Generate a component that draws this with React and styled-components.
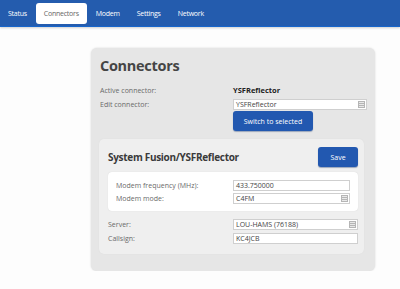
import React from 'react';
import styled, { createGlobalStyle } from 'styled-components';

const Global = createGlobalStyle`
  html, body {
    margin: 0;
    padding: 0;
    background: #fdfdfd;
    font-family: "Open Sans", "DejaVu Sans", sans-serif;
  }
`;

const Nav = styled.div`
  height: 26px;
  background: #245cae;
  border-bottom: 1px solid #1766cc;
  box-shadow: 0 1px 2px #cfcfcf;
  display: flex;
  align-items: center;
  gap: 1px;
`;

const Tab = styled.div`
  height: 21px;
  padding: 0 8px;
  display: flex;
  align-items: center;
  font-size: 7px;
  letter-spacing: -0.25px;
  border-radius: 3px;
  color: ${p => (p.$active ? '#666' : '#fff')};
  background: ${p => (p.$active ? '#fff' : 'transparent')};
`;

const Main = styled.div`
  padding: 21px 0 0 91px;
`;

const Card = styled.div`
  width: 284px;
  box-sizing: border-box;
  background: #e6e6e6;
  border-radius: 6px;
  box-shadow: 0 0 2px #d4d4d4;
  padding: 8px 8px 17px 9px;
`;

const Title = styled.h1`
  margin: 0 0 9px;
  font-size: 14.5px;
  font-weight: 700;
  letter-spacing: -0.3px;
  color: #454545;
  height: 20px;
  line-height: 20px;
`;

const Row = styled.div`
  display: grid;
  grid-template-columns: ${p => p.$label}px 1fr;
  align-items: center;
  height: ${p => p.$h || 11}px;
  margin-bottom: ${p => p.$gap ?? 2}px;
`;

const Label = styled.span`
  font-size: 7px;
  line-height: 9px;
  color: #6a6a6a;
`;

const Value = styled.span`
  font-size: 7.5px;
  line-height: 9px;
  font-weight: 700;
  color: #222;
`;

const Field = styled.div`
  position: relative;
  height: 11px;
  width: ${p => p.$w}px;
  box-sizing: border-box;
  background: #fff;
  border: 1px solid #cfcfcf;
  font-size: 7px;
  color: #444;
  padding-left: 2px;
  line-height: 9px;
`;

const SelectIcon = styled.span`
  position: absolute;
  right: 1px;
  top: 1px;
  width: 7px;
  height: 7px;
  background: #b5b5b5;
  display: flex;
  flex-direction: column;
  justify-content: center;
  gap: 1px;
  padding: 0 1px;
  box-sizing: border-box;
  & > i {
    display: block;
    height: 1px;
    background: #e8e8e8;
  }
`;

const Button = styled.button`
  display: block;
  font-family: inherit;
  font-size: 7px;
  color: #fff;
  background: #2258b0;
  border: none;
  border-radius: 3px;
  box-shadow: 0 1px 1px #9aa6bb;
  height: 20px;
  width: ${p => p.$w}px;
  padding: 0;
`;

const Actions = styled.div`
  display: flex;
  padding-left: 133px;
  margin-top: -1px;
`;

const Panel = styled.div`
  margin: 8px 3px 0 -1px;
  background: #efefef;
  border-radius: 5px;
  box-shadow: 0 0 1px #d8d8d8;
  padding: 8px 6px 10px 9px;
`;

const PanelHead = styled.div`
  display: flex;
  justify-content: space-between;
  align-items: center;
  height: 20px;
  margin-bottom: 5px;
`;

const SubTitle = styled.h2`
  margin: 0;
  font-size: 10px;
  letter-spacing: -0.3px;
  font-weight: 700;
  color: #3a3a3a;
`;

const Box = styled.div`
  background: #fff;
  border-radius: 4px;
  box-shadow: 0 0 1px #cfcfcf;
  padding: 8px 8px 5px 8px;
  margin-bottom: 8px;
`;

const Select = ({ w, children }) => (
  <Field $w={w}>
    {children}
    <SelectIcon>
      <i />
      <i />
      <i />
    </SelectIcon>
  </Field>
);

export default function App() {
  return (
    <>
      <Global />
      <Nav>
        <Tab>Status</Tab>
        <Tab $active>Connectors</Tab>
        <Tab>Modem</Tab>
        <Tab>Settings</Tab>
        <Tab>Network</Tab>
      </Nav>
      <Main>
        <Card>
          <Title>Connectors</Title>
          <Row $label={133} $h={10} $gap={4}>
            <Label>Active connector:</Label>
            <Value>YSFReflector</Value>
          </Row>
          <Row $label={133}>
            <Label>Edit connector:</Label>
            <Select w={134}>YSFReflector</Select>
          </Row>
          <Actions>
            <Button $w={80}>Switch to selected</Button>
          </Actions>
          <Panel>
            <PanelHead>
              <SubTitle>System Fusion/YSFReflector</SubTitle>
              <Button $w={40}>Save</Button>
            </PanelHead>
            <Box>
              <Row $label={117}>
                <Label>Modem frequency (MHz):</Label>
                <Field $w={117}>433.750000</Field>
              </Row>
              <Row $label={117}>
                <Label>Modem mode:</Label>
                <Select w={117}>C4FM</Select>
              </Row>
            </Box>
            <Row $label={125} $gap={3}>
              <Label>Server:</Label>
              <Select w={125}>LOU-HAMS (76188)</Select>
            </Row>
            <Row $label={125} $gap={0}>
              <Label>Callsign:</Label>
              <Field $w={125}>KC4JCB</Field>
            </Row>
          </Panel>
        </Card>
      </Main>
    </>
  );
}
